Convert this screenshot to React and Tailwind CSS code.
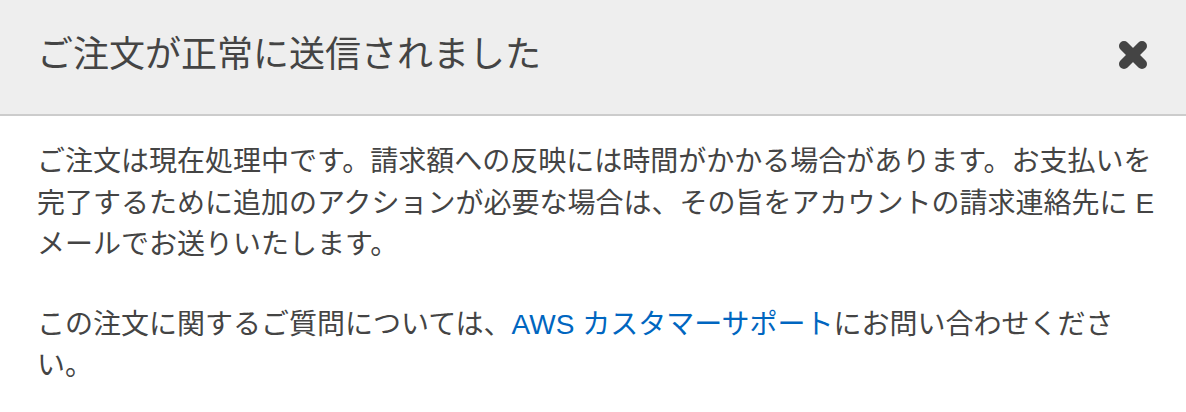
export default function App() {
  const font = { fontFamily: '"Liberation Sans", "Noto Sans CJK JP", sans-serif' };
  return (
    <div className="w-[1186px] h-[412px] bg-white text-[#444]" style={font}>
      <div className="h-[116px] bg-[#eeeeee] border-b-2 border-[#cccccc] flex items-center justify-between pl-[37px] pr-[38px] pb-[4px]">
        <h1 className="text-[36px] leading-[48px] font-normal text-[#444]">ご注文が正常に送信されました</h1>
        <svg width="30" height="30" viewBox="0 0 30 30" aria-label="close">
          <line x1="6" y1="6" x2="24" y2="24" stroke="#444" strokeWidth="10" strokeLinecap="round" />
          <line x1="24" y1="6" x2="6" y2="24" stroke="#444" strokeWidth="10" strokeLinecap="round" />
        </svg>
      </div>
      <div className="pl-[37px] pr-[24px] pt-[25px] text-[28px] leading-[41.5px]">
        <p className="mb-[38px]">
          ご注文は現在処理中です。請求額への反映には時間がかかる場合があります。お支払いを完了するために追加のアクションが必要な場合は、その旨をアカウントの請求連絡先に Eメールでお送りいたします。
        </p>
        <p>
          この注文に関するご質問については、<a className="text-[#0066c0]" href="#">AWS カスタマーサポート</a>にお問い合わせください。
        </p>
      </div>
    </div>
  );
}
